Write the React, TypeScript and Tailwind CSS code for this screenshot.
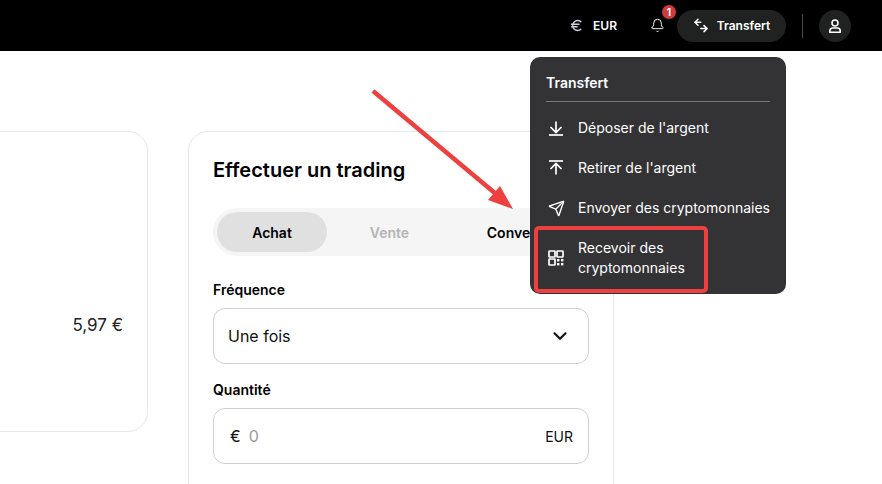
import { Bell, ChevronDown, Euro, Send } from "lucide-react";

const font = "font-['Inter',sans-serif]";

const TransferIcon = () => (
  <svg width="16" height="16" viewBox="0 0 16 16" fill="none" stroke="currentColor" strokeWidth="1.5" strokeLinecap="round" strokeLinejoin="round">
    <path d="M5 1.2 2 4.2l3 3" />
    <path d="M2.2 4.2h5.6" />
    <path d="M7.8 10.6h6" />
    <path d="m11 7.6 3 3-3 3" />
  </svg>
);

const UserIcon = () => (
  <svg width="16" height="16" viewBox="0 0 16 16" fill="none" stroke="currentColor" strokeWidth="1.6" strokeLinejoin="round">
    <circle cx="8" cy="5" r="3" />
    <path d="M2.8 14.2v-1.4a2.8 2.8 0 0 1 2.8-2.8h4.8a2.8 2.8 0 0 1 2.8 2.8v1.4Z" />
  </svg>
);

const DepositIcon = () => (
  <svg width="20" height="20" viewBox="0 0 20 20" fill="none" stroke="currentColor" strokeWidth="1.7">
    <path d="M10 3.5V14.5" />
    <path d="M4.5 9 10 14.5 15.5 9" />
    <path d="M3 17h14" />
  </svg>
);

const WithdrawIcon = () => (
  <svg width="20" height="20" viewBox="0 0 20 20" fill="none" stroke="currentColor" strokeWidth="1.7">
    <path d="M10 16.5V5.5" />
    <path d="M4.5 11 10 5.5 15.5 11" />
    <path d="M3 3h14" />
  </svg>
);

const QrIcon = () => (
  <svg width="16" height="16" viewBox="0 0 16 16" fill="none" stroke="currentColor" strokeWidth="1.7">
    <rect x="1" y="1" width="6" height="6" rx="0.6" />
    <rect x="9" y="1" width="6" height="6" rx="0.6" />
    <rect x="1" y="9" width="6" height="6" rx="0.6" />
    <g fill="currentColor" stroke="none">
      <rect x="9" y="9" width="2.4" height="2.4" />
      <rect x="13" y="9" width="2.4" height="2.4" />
      <rect x="9" y="13" width="2.4" height="2.4" />
      <rect x="13" y="13" width="2.4" height="2.4" />
    </g>
  </svg>
);

const Header = () => (
  <header className="flex h-[51px] items-center justify-end bg-black pr-[31px] text-white">
    <Euro size={15} strokeWidth={2.1} className="text-gray-300" />
    <span className="ml-[9px] text-[12px] font-semibold">EUR</span>
    <div className="relative z-10 ml-[33px] mr-[12px] flex">
      <Bell size={15} strokeWidth={1.5} />
      <span className="absolute -top-[13px] left-[12px] flex h-[14px] w-[14px] items-center justify-center rounded-full bg-[#d13a40] text-[10px] font-bold">
        1
      </span>
    </div>
    <button className="flex h-8 w-[109px] items-center justify-center gap-[8px] rounded-full bg-[#202222] text-[12px] font-semibold">
      <TransferIcon />
      Transfert
    </button>
    <div className="ml-4 mr-4 h-[24px] w-px bg-[#4a4a4a]" />
    <button className="flex h-8 w-8 items-center justify-center rounded-full bg-[#202222]">
      <UserIcon />
    </button>
  </header>
);

const Tabs = () => (
  <div className="mt-[24px] flex h-12 items-center rounded-full bg-[#f5f5f5] p-1 text-[14px] font-semibold">
    <div className="flex h-10 w-[110px] items-center justify-center rounded-full bg-[#e0e0e0] text-black">Achat</div>
    <div className="flex h-10 w-[125px] items-center justify-center text-[#b4b4b4]">Vente</div>
    <div className="flex h-10 flex-1 items-center justify-center text-black">Convertir</div>
  </div>
);

const TradeCard = () => (
  <section className="h-[420px] w-[426px] shrink-0 rounded-t-[20px] border border-[#e8e8e8] bg-white px-6 pt-6">
    <h2 className="text-[20px] leading-[28px] font-semibold text-black">Effectuer un trading</h2>
    <Tabs />
    <label className="mt-[25px] block text-[14px] leading-[18px] font-semibold text-black">Fréquence</label>
    <div className="mt-[9px] flex h-14 items-center justify-between rounded-xl border border-[#cfcfcf] pl-[14px] pr-[17px] text-[16px] text-[#111]">
      Une fois
      <ChevronDown size={22} strokeWidth={2.3} />
    </div>
    <label className="mt-[17px] block text-[14px] leading-[18px] font-semibold text-black">Quantité</label>
    <div className="mt-[9px] flex h-14 items-center rounded-xl border border-[#cfcfcf] pl-4 pr-[15px] text-[16px]">
      <span className="text-[#111]">€</span>
      <span className="ml-2 text-[#9a9a9a]">0</span>
      <span className="ml-auto text-[14px] text-[#111]">EUR</span>
    </div>
  </section>
);

const MenuItem = ({ icon, children }: { icon: React.ReactNode; children: React.ReactNode }) => (
  <div className="flex items-center gap-3">
    <span className="flex w-5 shrink-0 justify-center">{icon}</span>
    <span>{children}</span>
  </div>
);

const TransferMenu = () => (
  <div className="absolute left-[530px] top-[57px] h-[237px] w-[256px] rounded-[10px] bg-[#333336] px-4 pt-[17px] text-[14px] text-white">
    <div className="border-b border-[#77777a] pb-[9px] text-[14px] leading-[18px] font-semibold">Transfert</div>
    <div className="mt-[16px] flex flex-col gap-5 leading-5">
      <MenuItem icon={<DepositIcon />}>Déposer de l'argent</MenuItem>
      <MenuItem icon={<WithdrawIcon />}>Retirer de l'argent</MenuItem>
      <MenuItem icon={<Send size={17} strokeWidth={2} />}>Envoyer des cryptomonnaies</MenuItem>
      <MenuItem icon={<QrIcon />}>Recevoir des cryptomonnaies</MenuItem>
    </div>
  </div>
);

const Annotation = () => (
  <>
    <div className="absolute left-[534px] top-[226px] h-[67px] w-[174px] rounded-[5px] border-4 border-[#ef4040]" />
    <svg className="absolute left-[365px] top-[85px]" width="170" height="130" viewBox="0 0 170 130">
      <path d="M8 6 131 109" stroke="#ef4040" strokeWidth="4.5" />
      <path d="M148 124 123 115 135 101Z" fill="#ef4040" />
    </svg>
  </>
);

export default function App() {
  return (
    <div className={`relative h-[484px] w-[882px] overflow-hidden bg-white ${font}`}>
      <Header />
      <main className="flex gap-10 pt-[80px]">
        <section className="-ml-[100px] h-[301px] w-[248px] shrink-0 rounded-[20px] border border-[#e8e8e8] bg-white pr-6 pt-[181px] text-right text-[17px] leading-6 text-[#222]">
          5,97 €
        </section>
        <TradeCard />
      </main>
      <TransferMenu />
      <Annotation />
    </div>
  );
}
